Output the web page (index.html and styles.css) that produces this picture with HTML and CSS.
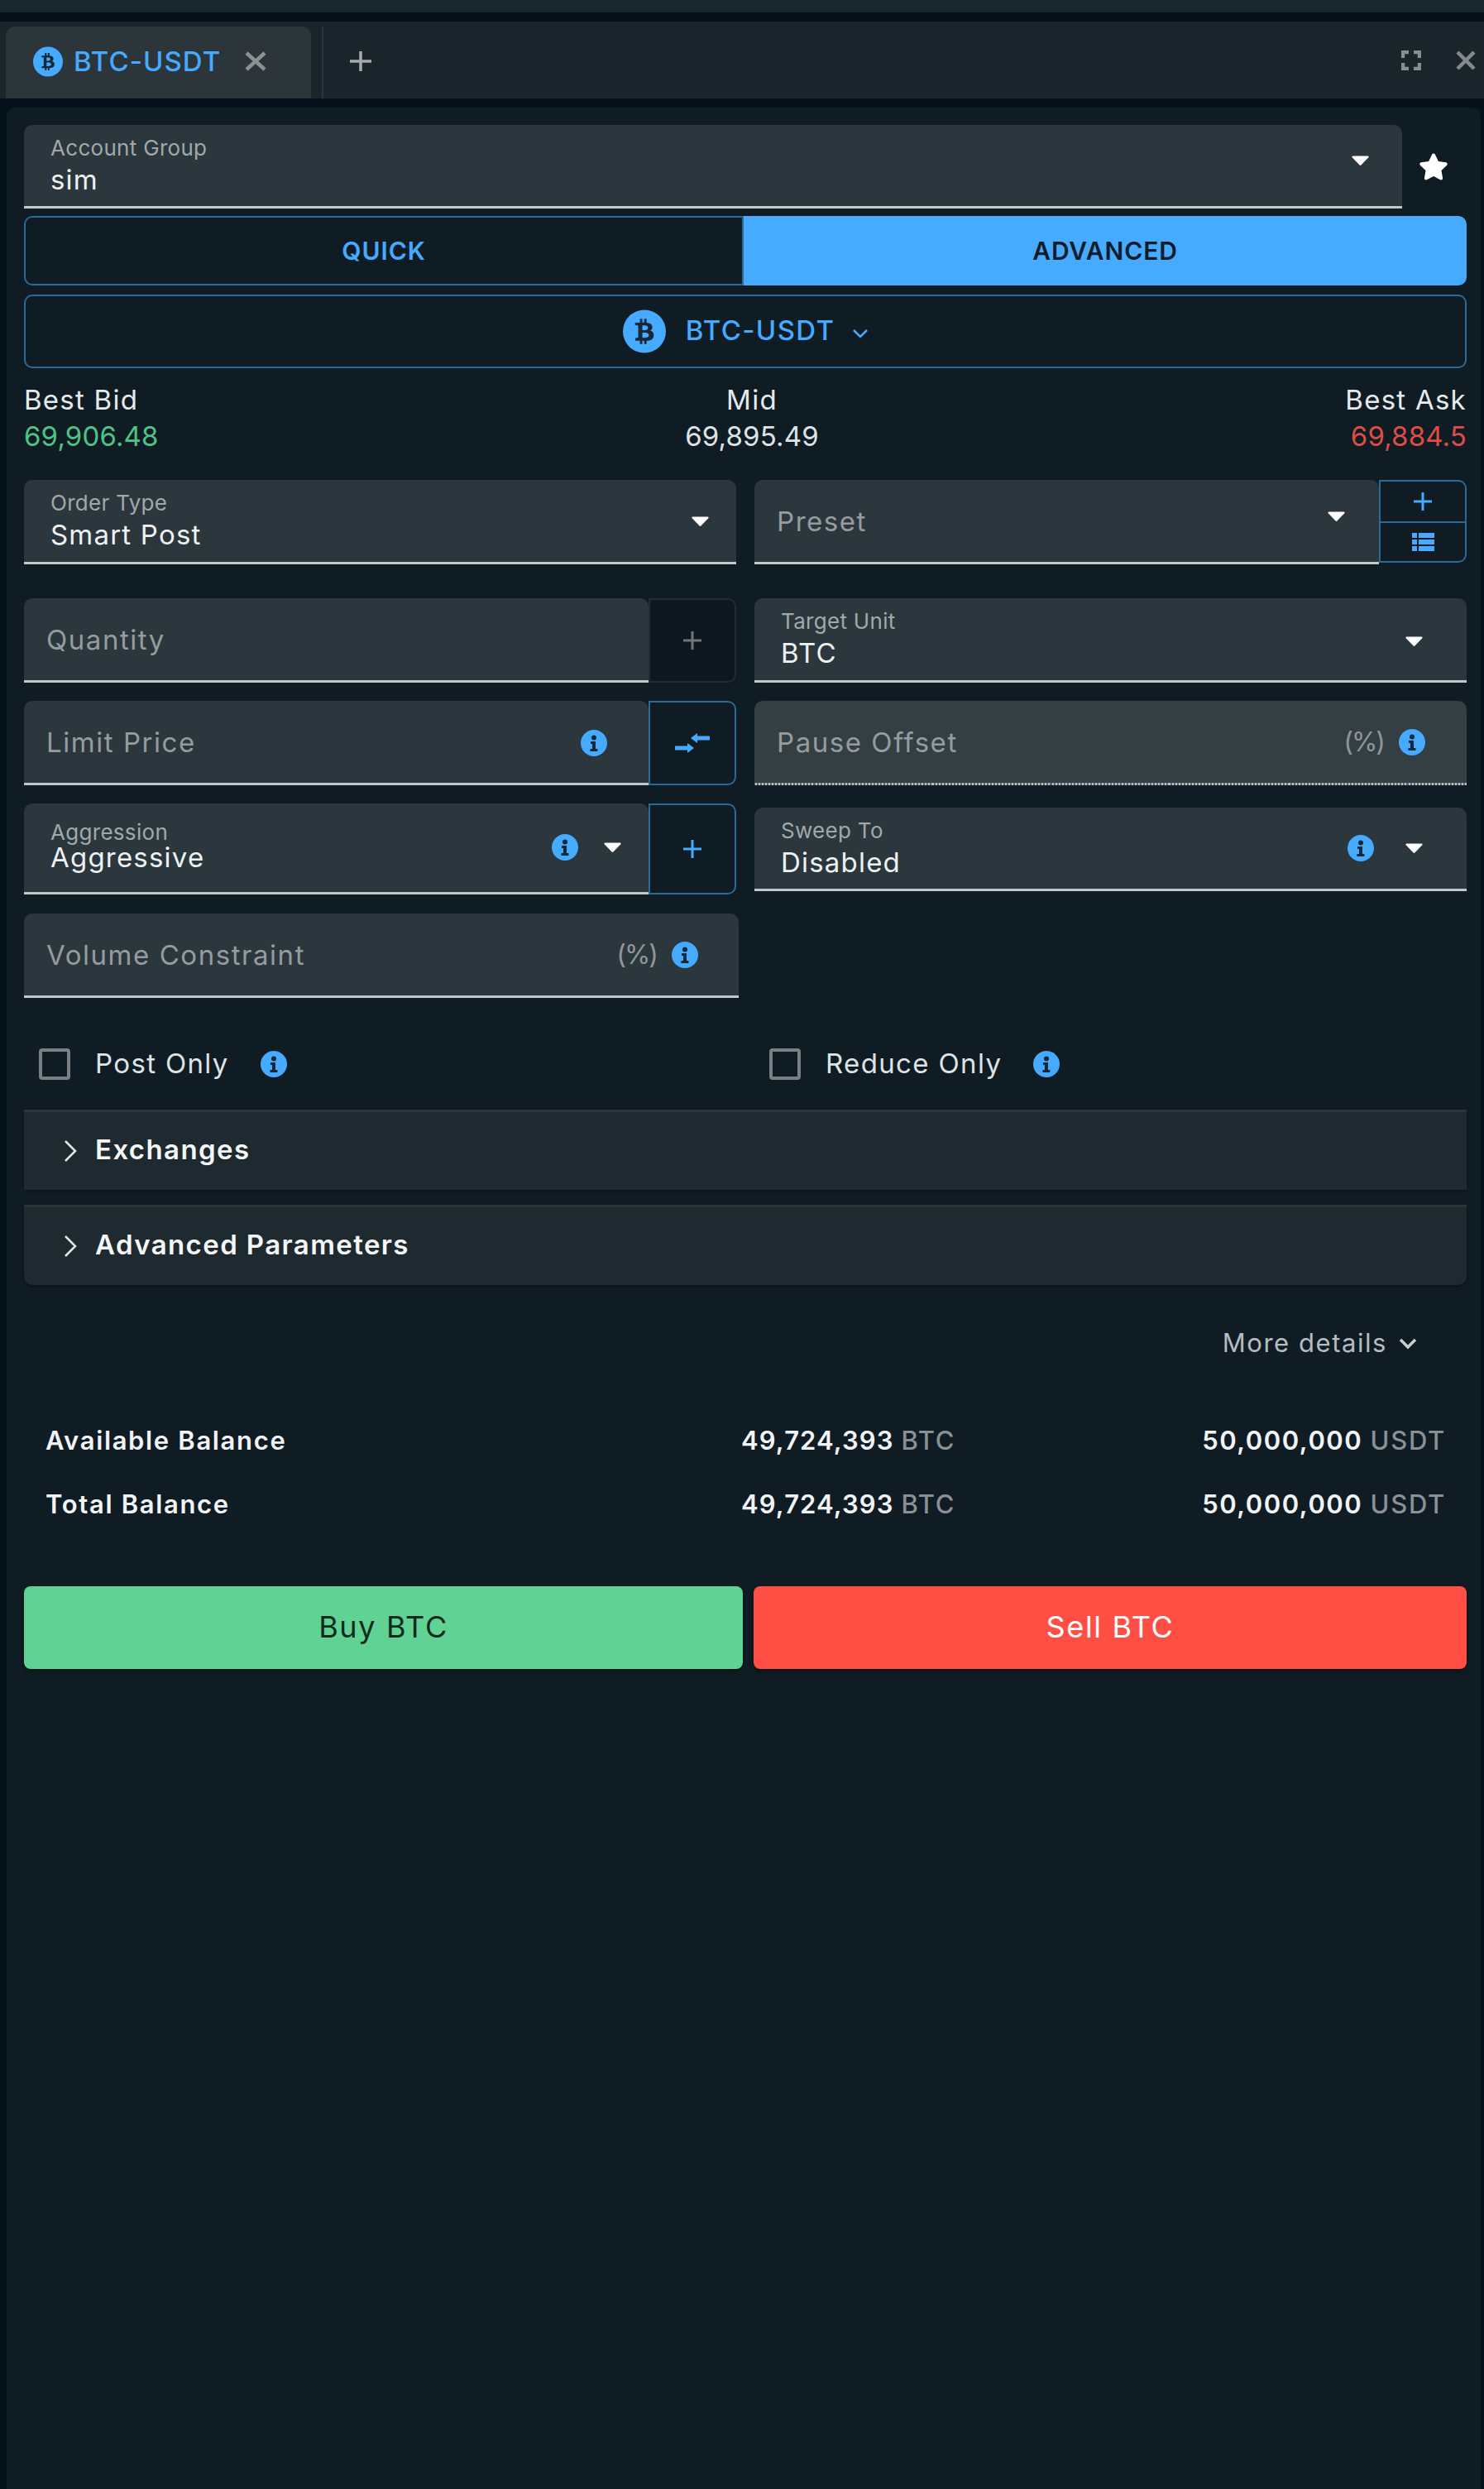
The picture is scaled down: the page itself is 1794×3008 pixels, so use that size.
FILE: index.html
```html
<!DOCTYPE html>
<html lang="en">
<head>
<meta charset="utf-8">
<title>BTC-USDT</title>
<link rel="stylesheet" href="styles.css">
</head>
<body>
<svg class="defs" aria-hidden="true">
  <defs>
    <symbol id="btc" viewBox="0 0 512 512"><circle cx="256" cy="256" r="256" fill="#46aaff"/><g transform="translate(143 105) scale(0.59)" fill="#14283a"><path d="M310.204 242.638c27.73-14.18 45.377-39.39 41.28-81.3-5.358-57.351-52.458-76.573-114.85-81.929V0h-48.528v77.203c-12.605 0-25.525.315-38.444.63V0h-48.528v79.409c-17.842.539-38.622.276-97.37 0v51.678c38.314-.678 58.417-3.14 63.023 21.427v217.429c-2.925 19.492-18.524 16.685-53.255 16.071L3.765 443.68c88.481 0 97.37.315 97.37.315V512h48.528v-67.06c13.234.315 26.154.315 38.444.315V512h48.528v-68.005c81.299-4.412 135.647-24.894 142.895-101.467 5.671-61.446-23.32-88.862-69.326-99.89zM150.608 134.553c27.415 0 113.126-8.507 113.126 48.528 0 54.515-85.71 48.212-113.126 48.212v-96.74zm0 251.776V279.821c32.772 0 133.127-9.138 133.127 53.255-.001 60.186-100.355 53.253-133.127 53.253z"/></g></symbol>
    <symbol id="info" viewBox="0 0 32 32"><circle cx="16" cy="16" r="16" fill="#46aaff"/><circle cx="16" cy="9.5" r="3" fill="#14283a"/><path d="M12 14h6v9h2.400v3h-9v-3H14v-6h-2z" fill="#14283a"/></symbol>
    <symbol id="caret" viewBox="0 0 21 12"><path d="M1.500 .5h18c1 0 1.400 1 .8 1.700l-8.900 9.300c-.5.500-1.300.500-1.800 0L.7 2.200C.1 1.500.5.500 1.500.5z" fill="#fff"/></symbol>
  </defs>
</svg>

<div class="topbar"></div>

<nav class="tabbar">
  <div class="tab">
    <svg class="tab-coin"><use href="#btc"/></svg>
    <span class="tab-name">BTC-USDT</span>
    <svg class="tab-x" viewBox="0 0 26 24"><path d="M2 2l22 20M24 2L2 22"/></svg>
  </div>
  <div class="tab-divider"></div>
  <svg class="tab-add" viewBox="0 0 26 24"><path d="M13 0v24M0 12h26"/></svg>
  <div class="tab-tools">
    <svg class="tool-expand" viewBox="0 0 24 24"><path d="M2 9V2h7M15 2h7v7M22 15v7h-7M9 22H2v-7"/></svg>
    <svg class="tool-x" viewBox="0 0 24 24"><path d="M2 2l20 20M22 2L2 22"/></svg>
  </div>
</nav>

<main class="panel">
  <div class="account-row">
    <div class="field account-field">
      <div class="stack">
        <span class="label">Account Group</span>
        <span class="value">sim</span>
      </div>
      <svg class="caret caret-account"><use href="#caret"/></svg>
    </div>
    <svg class="star" viewBox="0 0 576 512"><path d="M259.300 17.800L194 150.200 47.900 171.500c-26.200 3.800-36.700 36.100-17.700 54.600l105.700 103-25 145.500c-4.500 26.300 23.200 46 46.400 33.700L288 439.600l130.700 68.700c23.200 12.200 50.900-7.400 46.400-33.700l-25-145.500 105.700-103c19-18.500 8.500-50.800-17.700-54.600L382 150.200 316.700 17.800c-11.700-23.600-45.600-23.900-57.400 0z"/></svg>
  </div>

  <div class="mode-toggle">
    <button class="mode mode-quick">QUICK</button>
    <button class="mode mode-advanced">ADVANCED</button>
  </div>

  <div class="symbol-box">
    <svg class="symbol-coin"><use href="#btc"/></svg>
    <span class="symbol-name">BTC-USDT</span>
    <svg class="symbol-chevron" viewBox="0 0 18 10"><path d="M1 1l8 8 8-8"/></svg>
  </div>

  <div class="prices">
    <div class="price price-left"><span class="price-label">Best Bid</span><span class="price-value bid">69,906.48</span></div>
    <div class="price price-mid"><span class="price-label">Mid</span><span class="price-value">69,895.49</span></div>
    <div class="price price-right"><span class="price-label">Best Ask</span><span class="price-value ask">69,884.5</span></div>
  </div>

  <div class="form-grid">
    <div class="field">
      <div class="stack">
        <span class="label">Order Type</span>
        <span class="value">Smart Post</span>
      </div>
      <svg class="caret caret-order"><use href="#caret"/></svg>
    </div>

    <div class="combo">
      <div class="field field-right">
        <span class="placeholder">Preset</span>
        <svg class="caret caret-preset"><use href="#caret"/></svg>
      </div>
      <div class="addon-stack">
        <div class="addon-cell"><svg class="plus-small" viewBox="0 0 22 24"><path d="M11 1v22M0 12h22"/></svg></div>
        <div class="addon-cell"><svg class="list-icon" viewBox="0 0 27 22"><rect x="0" y="0" width="6" height="6"/><rect x="0" y="8" width="6" height="6"/><rect x="0" y="16" width="6" height="6"/><rect x="8" y="0" width="19" height="6"/><rect x="8" y="8" width="19" height="6"/><rect x="8" y="16" width="19" height="6"/></svg></div>
      </div>
    </div>
  </div>

  <div class="form-grid grid-gap-top">
    <div class="combo">
      <div class="field">
        <span class="placeholder">Quantity</span>
      </div>
      <div class="addon addon-muted"><svg class="plus-small plus-muted" viewBox="0 0 22 24"><path d="M11 1v22M0 12h22"/></svg></div>
    </div>

    <div class="field">
      <div class="stack">
        <span class="label">Target Unit</span>
        <span class="value">BTC</span>
      </div>
      <svg class="caret caret-target"><use href="#caret"/></svg>
    </div>
  </div>

  <div class="form-grid grid-gap">
    <div class="combo">
      <div class="field">
        <span class="placeholder">Limit Price</span>
        <svg class="info info-limit"><use href="#info"/></svg>
      </div>
      <div class="addon"><svg class="swap" viewBox="0 0 42 25"><path class="swap-line" d="M42 6H24"/><path class="swap-head" d="M19 6l8-6v12z"/><path class="swap-line" d="M0 18h18"/><path class="swap-head" d="M23 18l-8-6v12z"/></svg></div>
    </div>

    <div class="field field-disabled">
      <span class="placeholder">Pause Offset</span>
      <div class="field-end end-pause"><span class="unit">(%)</span><svg class="info"><use href="#info"/></svg></div>
    </div>
  </div>

  <div class="form-grid grid-gap-aggr">
    <div class="combo combo-tall">
      <div class="field">
        <div class="stack stack-tight">
          <span class="label">Aggression</span>
          <span class="value">Aggressive</span>
        </div>
        <div class="field-end end-aggr"><svg class="info"><use href="#info"/></svg><svg class="caret"><use href="#caret"/></svg></div>
      </div>
      <div class="addon"><svg class="plus-small" viewBox="0 0 22 24"><path d="M11 1v22M0 12h22"/></svg></div>
    </div>

    <div class="field sweep-field">
      <div class="stack stack-sweep">
        <span class="label">Sweep To</span>
        <span class="value">Disabled</span>
      </div>
      <div class="field-end end-sweep"><svg class="info"><use href="#info"/></svg><svg class="caret"><use href="#caret"/></svg></div>
    </div>
  </div>

  <div class="field volume-field">
    <span class="placeholder">Volume Constraint</span>
    <div class="field-end end-volume"><span class="unit">(%)</span><svg class="info"><use href="#info"/></svg></div>
  </div>

  <div class="checks">
    <label class="check"><span class="box"></span><span class="check-text">Post Only</span><svg class="info"><use href="#info"/></svg></label>
    <label class="check check-right"><span class="box"></span><span class="check-text">Reduce Only</span><svg class="info"><use href="#info"/></svg></label>
  </div>

  <section class="accordion">
    <div class="acc-item"><svg class="acc-chevron" viewBox="0 0 16 26"><path d="M2 1l12 12L2 25"/></svg><span class="acc-title">Exchanges</span></div>
    <div class="acc-item acc-last"><svg class="acc-chevron" viewBox="0 0 16 26"><path d="M2 1l12 12L2 25"/></svg><span class="acc-title">Advanced Parameters</span></div>
  </section>

  <div class="more"><span>More details</span><svg class="more-chevron" viewBox="0 0 22 14"><path d="M2 2l9 9 9-9"/></svg></div>

  <div class="balances">
    <div class="bal-row">
      <span class="bal-label">Available Balance</span>
      <span class="bal-num">49,724,393 <span class="bal-unit">BTC</span></span>
      <span class="bal-num bal-end bal-wide">50,000,000 <span class="bal-unit">USDT</span></span>
    </div>
    <div class="bal-row">
      <span class="bal-label">Total Balance</span>
      <span class="bal-num">49,724,393 <span class="bal-unit">BTC</span></span>
      <span class="bal-num bal-end bal-wide">50,000,000 <span class="bal-unit">USDT</span></span>
    </div>
  </div>

  <div class="actions">
    <button class="action buy">Buy BTC</button>
    <button class="action sell">Sell BTC</button>
  </div>
</main>
</body>
</html>
```

FILE: styles.css
```css
* { box-sizing: border-box; }
html, body { margin: 0; padding: 0; }
body {
  width: 1794px;
  height: 3008px;
  overflow: hidden;
  background: #04101a;
  font-family: Inter, "Noto Sans", sans-serif;
  color: #e8ecee;
}
.defs { position: absolute; width: 0; height: 0; }
svg { display: block; flex: none; }

.topbar { height: 15px; background: #1b272e; }

.tabbar {
  display: flex;
  align-items: stretch;
  height: 93px;
  margin-top: 11px;
  padding-top: 6px;
  background: #1a252b;
  padding-left: 7px;
}
.tab {
  width: 369px;
  display: flex;
  align-items: center;
  padding-left: 33px;
  padding-bottom: 3px;
  background: #2c353a;
  border-radius: 12px 12px 0 0;
}
.tab-coin { width: 36px; height: 37px; margin-right: 13px; }
.tab-name { font-size: 33px; font-weight: 500; color: #46aaff; letter-spacing: 1.05px; }
.tab-x { width: 26px; height: 24px; margin-left: 29px; fill: none; stroke: #8d9091; stroke-width: 4.5; }
.tab-divider { width: 2px; margin-left: 13px; background: #2b353b; }
.tab-add { width: 26px; height: 24px; margin: 30px 0 0 32px; fill: none; stroke: #a9abab; stroke-width: 3.5; }
.tab-tools { margin-left: auto; display: flex; align-items: flex-start; gap: 42px; padding: 29px 10px 0 0; }
.tool-expand { width: 24px; height: 24px; fill: none; stroke: #8a8e90; stroke-width: 4.5; }
.tool-x { width: 24px; height: 24px; fill: none; stroke: #85898b; stroke-width: 4.5; }

.panel {
  margin: 11px 4px 0 8px;
  height: 2878px;
  padding: 21px 17px 0 21px;
  background: #0f1c24;
  border-radius: 10px 10px 0 0;
}

.field {
  position: relative;
  flex: 1;
  min-width: 0;
  display: flex;
  align-items: center;
  justify-content: space-between;
  background: #2c373d;
  border-bottom: 3px solid #c3c8ca;
  border-radius: 10px 10px 0 0;
  padding-left: 27px;
  height: 102px;
}
.field-right { padding-left: 27px; }
.field-disabled {
  background: #343f44;
  border-bottom: 3px solid transparent;
  border-image: repeating-linear-gradient(90deg, #b8bdbf 0 2px, #5f676b 2px 4px) 3;
  border-top: 0;
  border-left: 0;
  border-right: 0;
}
.stack { display: flex; flex-direction: column; padding-left: 5px; align-self: flex-start; padding-top: 13px; }
.label { font-size: 26px; line-height: 30px; color: #a1a8ab; letter-spacing: 0.3px; }
.value { font-size: 33px; line-height: 46px; color: #eef1f2; letter-spacing: 1.2px; }
.placeholder { font-size: 33px; line-height: 40px; color: #959c9f; letter-spacing: 1.55px; }
.unit { font-size: 32px; line-height: 40px; color: #8f9699; letter-spacing: -2px; }
.caret { width: 21px; height: 12px; }
.info { width: 32px; height: 32px; }
.field-end { display: flex; align-items: center; }

.account-row { display: flex; align-items: center; }
.account-field { flex: none; width: 1666px; height: 101px; }
.caret-account { margin: 0 40px 12px 0; }
.star { width: 36px; height: 33px; margin-left: 20px; fill: #fff; }
.caret-order { margin-right: 33px; }
.caret-preset { margin: 0 41px 12px 0; }
.caret-target { margin: 4px 53px 0 0; }
.info-limit { margin-right: 50px; margin-top: 2px; }
.end-pause { gap: 18px; padding-right: 50px; }
.end-volume { gap: 18px; padding-right: 49px; }
.end-aggr { gap: 31px; padding-right: 33px; margin-top: -2px; }
.end-sweep { gap: 38px; padding-right: 53px; margin-top: 0; }

.mode-toggle { display: flex; height: 84px; margin-top: 9px; }
.mode {
  font-family: inherit;
  font-size: 30px;
  letter-spacing: 0.9px;
  font-weight: 600;
  margin: 0;
  padding: 0;
  border: 2px solid #2a6a96;
}
.mode-quick {
  width: 870px;
  background: #0f1c24;
  color: #46aaff;
  border-radius: 10px 0 0 10px;
}
.mode-advanced {
  flex: 1;
  background: #46aaff;
  color: #0d1d2e;
  border-color: #46aaff;
  border-radius: 0 10px 10px 0;
}

.symbol-box {
  height: 89px;
  margin-top: 11px;
  display: flex;
  align-items: center;
  justify-content: center;
  border: 2px solid #2a6a96;
  border-radius: 10px;
}
.symbol-coin { width: 52px; height: 53px; margin-right: 24px; }
.symbol-name { font-size: 33px; font-weight: 500; color: #46aaff; letter-spacing: 1.35px; padding-bottom: 3px; }
.symbol-chevron { width: 18px; height: 10px; margin: 4px 0 0 22px; fill: none; stroke: #46aaff; stroke-width: 2.5; }

.prices { display: flex; justify-content: space-between; height: 135px; padding-top: 17px; }
.price { display: flex; flex-direction: column; }
.price-mid { align-items: center; }
.price-right { align-items: flex-end; }
.price-label { font-size: 33px; line-height: 42px; color: #e6eaec; letter-spacing: 1.25px; }
.price-value { font-size: 33px; line-height: 46px; color: #dfe3e5; letter-spacing: 0.15px; }
.bid { color: #4fc285; }
.ask { color: #de4c46; }

.form-grid { display: grid; grid-template-columns: 861px 861px; column-gap: 22px; }
.grid-gap-top { margin-top: 41px; }
.grid-gap { margin-top: 22px; }
.grid-gap-aggr { margin-top: 22px; align-items: center; }

.combo { display: flex; height: 102px; }
.combo-tall { height: 110px; }
.combo-tall .field { height: 110px; }
.stack-tight { padding-top: 20px; }
.stack-tight .value { line-height: 30px; }
.stack-sweep { padding-top: 13px; }
.sweep-field { height: 101px; }

.addon {
  width: 106px;
  flex: none;
  display: flex;
  align-items: center;
  justify-content: center;
  border: 2px solid #2a6a96;
  border-radius: 0 10px 10px 0;
  background: #0f1c24;
}
.addon-muted { border-color: #222d34; background: #0e1820; }
.addon-stack {
  width: 106px;
  flex: none;
  display: grid;
  grid-template-rows: 1fr 1fr;
  height: 100px;
  border: 2px solid #2a6a96;
  border-radius: 0 10px 10px 0;
}
.addon-cell { display: flex; align-items: center; justify-content: center; }
.addon-cell + .addon-cell { border-top: 2px solid #2a6a96; }
.plus-small { width: 22px; height: 24px; fill: none; stroke: #46aaff; stroke-width: 3; }
.plus-muted { stroke: #6f7578; }
.list-icon { width: 27px; height: 22px; fill: #46aaff; }
.swap { width: 42px; height: 25px; }
.swap-line { fill: none; stroke: #46aaff; stroke-width: 5; }
.swap-head { fill: #46aaff; }

.volume-field { flex: none; width: 864px; margin-top: 23px; }

.checks { display: grid; grid-template-columns: 883px 1fr; margin-top: 61px; height: 38px; }
.check { display: flex; align-items: center; padding-left: 18px; }
.box { width: 38px; height: 38px; border: 4px solid #7a7f81; border-radius: 4px; margin-right: 30px; flex: none; }
.check-text { font-size: 33px; color: #dfe3e5; letter-spacing: 1.35px; line-height: 36px; padding-bottom: 2px; }
.check .info { margin-left: 38px; }

.accordion { margin-top: 36px; display: flex; flex-direction: column; gap: 18px; }
.acc-item {
  display: flex;
  align-items: center;
  height: 97px;
  padding-left: 48px;
  padding-bottom: 4px;
  background: #1e2a30;
  border-top: 3px solid #2f3436;
  box-shadow: 0 2px 3px rgba(0,0,0,.3);
}
.acc-last { border-radius: 0 0 10px 10px; }
.acc-chevron { width: 16px; height: 26px; fill: none; stroke: #e6e9ea; stroke-width: 2.500; margin: 4px 22px 0 0; }
.acc-title { font-size: 33px; font-weight: 600; color: #f4f6f7; letter-spacing: 1.4px; }

.more {
  display: flex;
  align-items: center;
  justify-content: flex-end;
  margin-top: 49px;
  height: 40px;
  padding-right: 60px;
  font-size: 31px;
  letter-spacing: 1.55px;
  color: #b6bcbf;
}
.more-chevron { width: 22px; height: 14px; margin: 4px 0 0 14px; fill: none; stroke: #c9ced0; stroke-width: 3.500; }

.balances { margin-top: 78px; display: flex; flex-direction: column; gap: 37px; padding: 0 25px 0 26px; }
.bal-row { display: grid; grid-template-columns: 841px auto 1fr; height: 40px; align-items: center; }
.bal-label { font-size: 31px; font-weight: 600; color: #f1f3f4; letter-spacing: 1.65px; }
.bal-num { font-size: 31px; font-weight: 600; color: #f1f3f4; letter-spacing: 1.1px; }
.bal-wide { letter-spacing: 1.5px; }
.bal-unit { font-weight: 500; color: #8a9094; letter-spacing: 1.7px; }
.bal-end { justify-self: end; }

.actions { display: grid; grid-template-columns: 869px 862px; column-gap: 13px; margin-top: 80px; }
.action {
  height: 100px;
  margin: 0;
  border: 0;
  padding: 0 0 3px;
  border-radius: 8px;
  font-family: inherit;
  font-size: 36px;
  letter-spacing: 1.65px;
  box-shadow: 0 3px 4px rgba(0,0,0,.35);
}
.buy { background: #60d394; color: #0e2a1c; }
.sell { background: #ff4f45; color: #fff; }
```
